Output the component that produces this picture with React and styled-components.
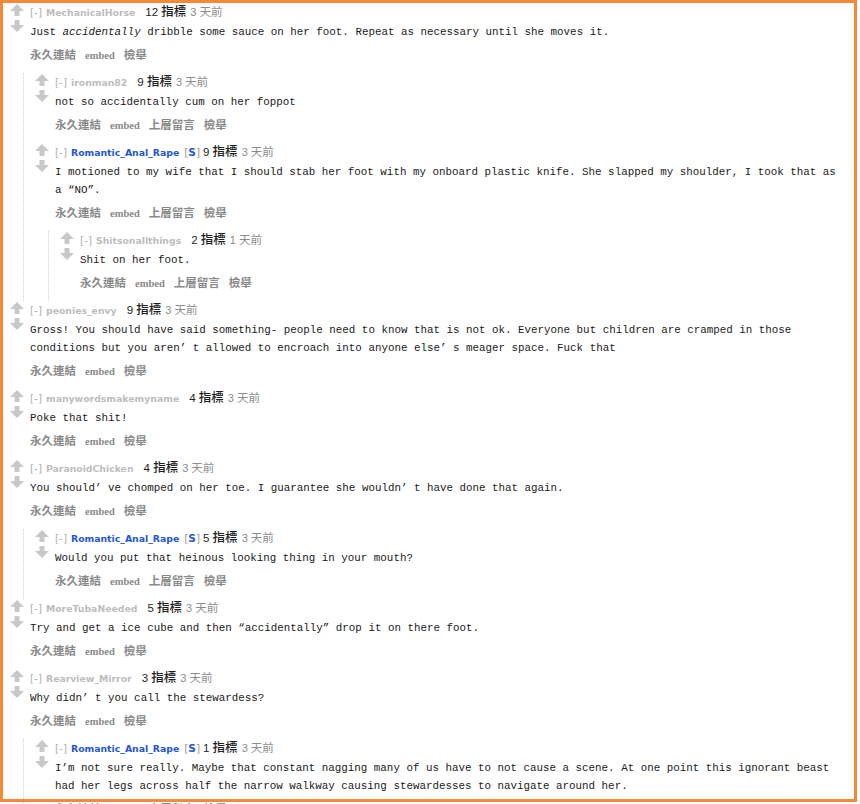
import React from 'react';
import styled, { createGlobalStyle } from 'styled-components';

const GlobalStyle = createGlobalStyle`
  html, body { margin: 0; padding: 0; background: #fff; }
  body { font-family: "Liberation Sans", "Noto Sans CJK TC", sans-serif; }
`;

const Page = styled.div`
  position: relative;
  width: 860px;
  height: 804px;
  overflow: hidden;
  box-sizing: border-box;
  padding: 3px 17px 0 3px;
  background: #fff;
`;

const Frame = styled.div`
  position: absolute;
  left: 0;
  top: 0;
  width: 857px;
  height: 802px;
  box-sizing: border-box;
  border: 3px solid #f7883a;
  pointer-events: none;
`;

const CommentBox = styled.div``;

const Main = styled.div`
  display: flex;
  padding-left: 7px;
  padding-bottom: 10px;
`;

const Voter = styled.div`
  flex: none;
  width: 14px;
  margin-right: 6px;
  padding-top: 1px;
  display: flex;
  flex-direction: column;
  gap: 4px;
`;

const Entry = styled.div`
  flex: 1;
  min-width: 0;
`;

const Tagline = styled.div`
  height: 16px;
  line-height: 16px;
  white-space: nowrap;
  margin-bottom: 4px;
  display: flex;
  align-items: baseline;
`;

const Toggle = styled.span`
  font-family: "DejaVu Sans", sans-serif;
  font-size: 10.5px;
  color: #b0b0b0;
  margin-right: 4px;
`;

const Author = styled.span`
  font-family: "DejaVu Sans", sans-serif;
  font-weight: bold;
  font-size: 9.3px;
  color: ${(p) => (p.$submitter ? '#2456d6' : '#bdbdbd')};
`;

const Flair = styled.span`
  font-family: "DejaVu Sans", sans-serif;
  font-size: 10.5px;
  color: #9a9a9a;
  margin-left: 5px;
  & b {
    color: #2456d6;
    font-weight: bold;
  }
`;

const Score = styled.span`
  font-family: "Liberation Sans", "Noto Sans CJK TC", sans-serif;
  font-size: 11.5px;
  color: #1e1e1e;
  margin-left: ${(p) => (p.$tight ? '3px' : '10px')};
  & b {
    font-family: "Noto Sans CJK TC", sans-serif;
    font-size: 12.5px;
    font-weight: 500;
  }
`;

const Time = styled.span`
  font-family: "Liberation Sans", "Noto Sans CJK TC", sans-serif;
  font-size: 11px;
  color: #8c8c8c;
  margin-left: 4px;
  & em {
    font-style: normal;
    font-family: "Noto Sans CJK TC", sans-serif;
    font-size: 11.5px;
  }
`;

const Body = styled.div`
  font-family: "Liberation Mono", "Noto Sans CJK SC", monospace;
  font-size: 10.85px;
  line-height: 18px;
  color: #1a1a1a;
  margin-bottom: 4px;
  & i {
    font-style: italic;
  }
`;

const Wide = styled.span`
  margin-right: 1ch;
`;

const Actions = styled.div`
  display: flex;
  align-items: baseline;
  gap: 9px;
  height: 18px;
  line-height: 18px;
  white-space: nowrap;
`;

const ActionLink = styled.span`
  font-family: ${(p) =>
    p.$latin ? '"Liberation Serif", serif' : '"Noto Sans CJK TC", sans-serif'};
  font-size: ${(p) => (p.$latin ? '10.5px' : '11.5px')};
  font-weight: bold;
  color: #8a8a8a;
`;

const Children = styled.div`
  margin-left: 20px;
  padding-left: 4px;
  border-left: 1px dotted #cfd3e0;
`;

const Arrow = ({ down }) => (
  <svg width="14" height="12" viewBox="0 0 14 12" style={{ display: 'block' }}>
    <path
      d="M0 7 L7 0 L14 7 L9.5 7 L9.5 12 L4.5 12 L4.5 7 Z"
      fill="#c8c8c8"
      transform={down ? 'rotate(180 7 6)' : undefined}
    />
  </svg>
);

const widen = (text) =>
  text.split(/(’)/).map((part, i) =>
    part === '’' ? <Wide key={i}>{part}</Wide> : part
  );

const Comment = ({ c }) => (
  <CommentBox>
    <Main>
      <Voter>
        <Arrow />
        <Arrow down />
      </Voter>
      <Entry>
        <Tagline>
          <Toggle>[-]</Toggle>
          <Author $submitter={c.submitter}>{c.author}</Author>
          {c.submitter && (
            <Flair>
              [<b>S</b>]
            </Flair>
          )}
          <Score $tight={c.submitter}>
            {c.score} <b>指標</b>
          </Score>
          <Time>
            {c.days} <em>天前</em>
          </Time>
        </Tagline>
        <Body>{c.body}</Body>
        <Actions>
          <ActionLink>永久連結</ActionLink>
          <ActionLink $latin>embed</ActionLink>
          {c.reply && <ActionLink>上層留言</ActionLink>}
          <ActionLink>檢舉</ActionLink>
        </Actions>
      </Entry>
    </Main>
    {c.children && (
      <Children>
        {c.children.map((ch, i) => (
          <Comment key={i} c={{ ...ch, reply: true }} />
        ))}
      </Children>
    )}
  </CommentBox>
);

const RAR = 'Romantic_Anal_Rape';

const comments = [
  {
    author: 'MechanicalHorse',
    score: 12,
    days: 3,
    body: (
      <>
        Just <i>accidentally</i> dribble some sauce on her foot. Repeat as necessary until she moves it.
      </>
    ),
    children: [
      {
        author: 'ironman82',
        score: 9,
        days: 3,
        body: 'not so accidentally cum on her foppot',
      },
      {
        author: RAR,
        submitter: true,
        score: 9,
        days: 3,
        body:
          'I motioned to my wife that I should stab her foot with my onboard plastic knife. She slapped my shoulder, I took that as a “NO”.',
        children: [
          {
            author: 'Shitsonallthings',
            score: 2,
            days: 1,
            body: 'Shit on her foot.',
          },
        ],
      },
    ],
  },
  {
    author: 'peonies_envy',
    score: 9,
    days: 3,
    body: widen(
      'Gross! You should have said something- people need to know that is not ok. Everyone but children are cramped in those conditions but you aren’t allowed to encroach into anyone else’s meager space. Fuck that'
    ),
  },
  {
    author: 'manywordsmakemyname',
    score: 4,
    days: 3,
    body: 'Poke that shit!',
  },
  {
    author: 'ParanoidChicken',
    score: 4,
    days: 3,
    body: widen('You should’ve chomped on her toe. I guarantee she wouldn’t have done that again.'),
    children: [
      {
        author: RAR,
        submitter: true,
        score: 5,
        days: 3,
        body: 'Would you put that heinous looking thing in your mouth?',
      },
    ],
  },
  {
    author: 'MoreTubaNeeded',
    score: 5,
    days: 3,
    body: 'Try and get a ice cube and then “accidentally” drop it on there foot.',
  },
  {
    author: 'Rearview_Mirror',
    score: 3,
    days: 3,
    body: widen('Why didn’t you call the stewardess?'),
    children: [
      {
        author: RAR,
        submitter: true,
        score: 1,
        days: 3,
        body:
          'I’m not sure really. Maybe that constant nagging many of us have to not cause a scene. At one point this ignorant beast had her legs across half the narrow walkway causing stewardesses to navigate around her.',
      },
    ],
  },
];

export default function App() {
  return (
    <>
      <GlobalStyle />
      <Page>
        {comments.map((c, i) => (
          <Comment key={i} c={c} />
        ))}
        <Frame />
      </Page>
    </>
  );
}
